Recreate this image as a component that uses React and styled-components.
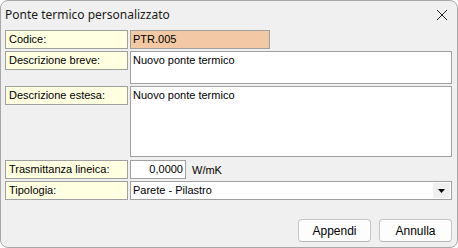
import styled, { createGlobalStyle } from "styled-components";

const Global = createGlobalStyle`
  html, body {
    margin: 0;
    padding: 0;
    background: #ffffff;
  }
`;

// STYLING
const Window = styled.div`
  width: 458px;
  height: 248px;
  box-sizing: border-box;
  border: 1px solid #a8a8a8;
  border-radius: 8px;
  background: #f0f0f0;
  display: flex;
  flex-direction: column;
  overflow: hidden;
  font-family: "Liberation Sans", Arial, sans-serif;
  font-size: 11px;
  color: #000;
`;
const TitleBar = styled.div`
  height: 27px;
  display: flex;
  align-items: center;
  justify-content: space-between;
  padding: 0 9px 0 4px;
  font-family: "Noto Sans", "Open Sans", sans-serif;
  font-size: 12px;
  color: #1a1a1a;
`;
const Close = styled.svg`
  width: 12px;
  height: 12px;
  margin-top: 1px;
`;
const Body = styled.div`
  flex: 1;
  display: flex;
  flex-direction: column;
  padding: 0 4px 5px 4px;
`;
const Form = styled.div`
  display: grid;
  grid-template-columns: 123px 1fr;
  column-gap: 2px;
  align-items: start;
`;
const Label = styled.div`
  height: 19px;
  box-sizing: border-box;
  border: 1px solid #a0a0a0;
  background: #ffffe1;
  padding: 0 3px;
  line-height: 17px;
  margin-top: ${(p) => p.$top || 2}px;
`;
const Field = styled.div`
  box-sizing: border-box;
  border: 1px solid #a0a0a0;
  background: ${(p) => p.$bg || "#ffffff"};
  width: ${(p) => p.$w || "auto"};
  height: ${(p) => p.$h || 19}px;
  padding: 0 3px 0 2px;
  line-height: 17px;
  margin-top: ${(p) => p.$top || 2}px;
  margin-right: 1px;
`;
const Inline = styled.div`
  display: flex;
  align-items: center;
  gap: 6px;
  margin-top: ${(p) => p.$top || 2}px;
`;
const Number = styled(Field)`
  margin: 0;
  width: 56px;
  text-align: right;
  padding-right: 2px;
`;
const Unit = styled.span`
  font-size: 11px;
`;
const Select = styled.div`
  display: flex;
  height: 19px;
  box-sizing: border-box;
  border: 1px solid #a0a0a0;
  background: #fff;
  margin-top: 2px;
  margin-right: 1px;
  line-height: 17px;
`;
const SelectText = styled.div`
  flex: 1;
  padding-left: 2px;
`;
const Arrow = styled.div`
  width: 17px;
  background: #f0f0f0;
  display: flex;
  align-items: center;
  justify-content: center;
  margin: 1px;
`;
const Footer = styled.div`
  margin-top: auto;
  display: flex;
  justify-content: flex-end;
  gap: 8px;
  padding-right: 1px;
`;
const Button = styled.div`
  width: 73px;
  height: 23px;
  box-sizing: border-box;
  border: 1px solid #c6c6c6;
  border-bottom-color: #b4b4b4;
  border-radius: 4px;
  background: #fdfdfd;
  display: flex;
  align-items: center;
  justify-content: center;
  font-size: 12px;
`;

const App = () => {
  return (
    <>
      <Global />
      <Window>
        <TitleBar>
          <span>Ponte termico personalizzato</span>
          <Close viewBox="0 0 12 12">
            <path d="M1 1 L11 11 M11 1 L1 11" stroke="#222" strokeWidth="1" />
          </Close>
        </TitleBar>
        <Body>
          <Form>
            <Label>Codice:</Label>
            <Field $bg="#f2c9a4" $w="140px">
              PTR.005
            </Field>

            <Label>Descrizione breve:</Label>
            <Field $h={33}>Nuovo ponte termico</Field>

            <Label>Descrizione estesa:</Label>
            <Field $h={71}>Nuovo ponte termico</Field>

            <Label $top={3}>Trasmittanza lineica:</Label>
            <Inline $top={3}>
              <Number>0,0000</Number>
              <Unit>W/mK</Unit>
            </Inline>

            <Label>Tipologia:</Label>
            <Select>
              <SelectText>Parete - Pilastro</SelectText>
              <Arrow>
                <svg width="7" height="4" viewBox="0 0 7 4">
                  <path d="M0 0 H7 L3.5 4 Z" fill="#000" />
                </svg>
              </Arrow>
            </Select>
          </Form>
          <Footer>
            <Button>Appendi</Button>
            <Button>Annulla</Button>
          </Footer>
        </Body>
      </Window>
    </>
  );
};

export default App;
